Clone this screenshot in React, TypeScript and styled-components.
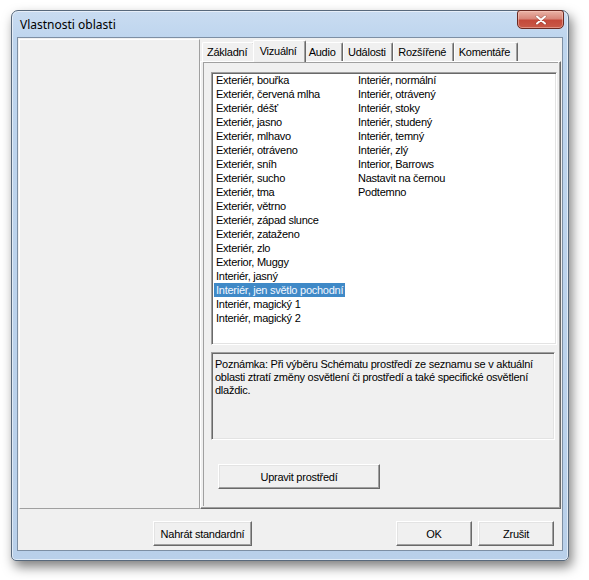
import React from "react";
import styled, { createGlobalStyle } from "styled-components";

const GlobalStyle = createGlobalStyle`
  html, body { margin: 0; padding: 0; background: #ffffff; }
  body { font-family: "Liberation Sans", Arial, sans-serif; }
  * { box-sizing: border-box; }
`;

const Stage = styled.div`
  width: 589px;
  height: 580px;
  padding: 10px 0 0 11px;
`;

const Window = styled.div`
  position: relative;
  width: 558px;
  height: 551px;
  border: 1px solid #58697c;
  border-radius: 7px 7px 5px 5px;
  background: linear-gradient(180deg, #c9dcf1 0%, #bed5ee 5%, #b9d0ea 100%);
  box-shadow: inset 0 0 0 1px rgba(255, 255, 255, 0.55), 3px 6px 12px rgba(0, 0, 0, 0.5);
  display: flex;
  flex-direction: column;
`;

const TitleBar = styled.div`
  height: 26px;
  display: flex;
  align-items: center;
  padding-left: 8px;
  font-family: "Noto Sans", "Liberation Sans", sans-serif;
  font-size: 12px;
  color: #000;
`;

const CloseButton = styled.div`
  position: absolute;
  top: -1px;
  right: 4px;
  width: 47px;
  height: 19px;
  border: 1px solid #6a2a22;
  border-radius: 3px 3px 5px 5px;
  background: linear-gradient(180deg, #eab3a6 0%, #d8877a 45%, #c4493a 55%, #c85a48 100%);
  box-shadow: inset 0 0 0 1px rgba(255, 210, 200, 0.45);
  display: flex;
  align-items: center;
  justify-content: center;
`;

const Client = styled.div`
  margin: 0 5px 0 5px;
  height: 514px;
  border: 1px solid #7d8fa4;
  background: #f0f0f0;
  display: flex;
  flex-direction: column;
  font-size: 11px;
  letter-spacing: -0.25px;
  color: #000;
`;

const MainRow = styled.div`
  height: 471px;
  display: flex;
`;

const SidePanel = styled.div`
  width: 181px;
  margin: 1px 0 0 1px;
  border-top: 1px solid #ffffff;
  border-left: 1px solid #ffffff;
  border-right: 1px solid #a0a0a0;
  border-bottom: 1px solid #a0a0a0;
  background: #f0f0f0;
`;

const TabControl = styled.div`
  flex: 1;
  display: flex;
  flex-direction: column;
  padding-top: 2px;
  padding-right: 1px;
`;

const TabStrip = styled.div`
  height: 21px;
  display: flex;
  align-items: flex-end;
  padding-left: 2px;
  position: relative;
  z-index: 1;
`;

const Tab = styled.div<{ $active?: boolean }>`
  height: ${(p) => (p.$active ? "22px" : "19px")};
  margin: ${(p) => (p.$active ? "0 -2px -1px -2px" : "0")};
  padding: ${(p) => (p.$active ? "0 8px 1px 6px" : "0 6.5px 0 4px")};
  display: flex;
  align-items: center;
  background: #f0f0f0;
  border-top: 1px solid #ffffff;
  border-left: 1px solid #ffffff;
  border-right: 1px solid #696969;
  border-radius: 2px 2px 0 0;
  box-shadow: inset -1px 0 0 #a0a0a0;
  position: relative;
  z-index: ${(p) => (p.$active ? 2 : 1)};
  white-space: nowrap;
`;

const TabPanel = styled.div`
  flex: 1;
  border-top: 1px solid #ffffff;
  border-left: 1px solid #ffffff;
  border-right: 1px solid #696969;
  border-bottom: 1px solid #696969;
  box-shadow: inset -1px -1px 0 #a0a0a0;
  display: flex;
`;

const PageFrame = styled.div`
  flex: 1;
  margin: 0 2px 2px 2px;
  border-top: 1px solid #a0a0a0;
  border-left: 1px solid #a0a0a0;
  padding: 9px 0 0 7px;
  display: flex;
  flex-direction: column;
`;

const SunkenBox = styled.div`
  border-top: 1px solid #a0a0a0;
  border-left: 1px solid #a0a0a0;
  border-right: 1px solid #ffffff;
  border-bottom: 1px solid #ffffff;
  box-shadow: inset 1px 1px 0 #696969, inset -1px -1px 0 #e3e3e3;
`;

const ListBox = styled(SunkenBox)`
  width: 346px;
  height: 273px;
  background: #ffffff;
  padding: 0 0 0 1px;
  display: grid;
  grid-auto-flow: column;
  grid-template-rows: repeat(18, 14px);
  grid-auto-columns: 142px;
  align-content: start;
`;

const ListItem = styled.div`
  height: 14px;
  padding-left: 1px;
  line-height: 14px;
  white-space: nowrap;
`;

const ItemLabel = styled.span<{ $selected?: boolean }>`
  display: inline-block;
  padding: 0 2px;
  height: 14px;
  background: ${(p) => (p.$selected ? "#3f89c7" : "transparent")};
  color: ${(p) => (p.$selected ? "#f2f7ff" : "#000")};
`;

const NoteBox = styled(SunkenBox)`
  width: 344px;
  height: 88px;
  margin-top: 7px;
  padding: 5px 4px 0 3px;
  line-height: 13px;
  background: #f0f0f0;
`;

const Button = styled.button<{ $w: number }>`
  width: ${(p) => p.$w}px;
  height: 25px;
  padding: 0;
  font-family: "Liberation Sans", Arial, sans-serif;
  font-size: 11px;
  letter-spacing: -0.25px;
  color: #000;
  background: #f0f0f0;
  border-top: 1px solid #ffffff;
  border-left: 1px solid #ffffff;
  border-right: 1px solid #696969;
  border-bottom: 1px solid #696969;
  box-shadow: inset -1px -1px 0 #a0a0a0, inset 1px 1px 0 #e3e3e3;
  display: flex;
  align-items: center;
  justify-content: center;
`;

const EditButton = styled(Button)`
  margin: 24px 0 0 7px;
`;

const BottomBar = styled.div`
  flex: 1;
  display: flex;
  align-items: flex-start;
  padding: 12px 8px 0 135px;
`;

const Spacer = styled.div`
  flex: 1;
`;

const ButtonGroup = styled.div`
  display: flex;
  gap: 6px;
`;

const tabs = ["Základní", "Vizuální", "Audio", "Události", "Rozšířené", "Komentáře"];

const schemes = [
  "Exteriér, bouřka",
  "Exteriér, červená mlha",
  "Exteriér, déšť",
  "Exteriér, jasno",
  "Exteriér, mlhavo",
  "Exteriér, otráveno",
  "Exteriér, sníh",
  "Exteriér, sucho",
  "Exteriér, tma",
  "Exteriér, větrno",
  "Exteriér, západ slunce",
  "Exteriér, zataženo",
  "Exteriér, zlo",
  "Exterior, Muggy",
  "Interiér, jasný",
  "Interiér, jen světlo pochodní",
  "Interiér, magický 1",
  "Interiér, magický 2",
  "Interiér, normální",
  "Interiér, otrávený",
  "Interiér, stoky",
  "Interiér, studený",
  "Interiér, temný",
  "Interiér, zlý",
  "Interior, Barrows",
  "Nastavit na černou",
  "Podtemno",
];

const selected = "Interiér, jen světlo pochodní";

export default function App() {
  return (
    <Stage>
      <GlobalStyle />
      <Window>
        <TitleBar>Vlastnosti oblasti</TitleBar>
        <CloseButton>
          <svg width="12" height="10" viewBox="0 0 12 10">
            <path d="M2 1.5 L10 8.5 M10 1.5 L2 8.5" stroke="#5a2019" strokeWidth="3" strokeLinecap="round" opacity="0.35" />
            <path d="M2 1.5 L10 8.5 M10 1.5 L2 8.5" stroke="#ffffff" strokeWidth="2" strokeLinecap="round" />
          </svg>
        </CloseButton>
        <Client>
          <MainRow>
            <SidePanel />
            <TabControl>
              <TabStrip>
                {tabs.map((t) => (
                  <Tab key={t} $active={t === "Vizuální"}>
                    {t}
                  </Tab>
                ))}
              </TabStrip>
              <TabPanel>
                <PageFrame>
                  <ListBox>
                    {schemes.map((s) => (
                      <ListItem key={s}>
                        <ItemLabel $selected={s === selected}>{s}</ItemLabel>
                      </ListItem>
                    ))}
                  </ListBox>
                  <NoteBox>
                    Poznámka: Při výběru Schématu prostředí ze seznamu se v aktuální
                    <br />
                    oblasti ztratí změny osvětlení či prostředí a také specifické osvětlení
                    <br />
                    dlaždic.
                  </NoteBox>
                  <EditButton $w={162}>Upravit prostředí</EditButton>
                </PageFrame>
              </TabPanel>
            </TabControl>
          </MainRow>
          <BottomBar>
            <Button $w={99}>Nahrát standardní</Button>
            <Spacer />
            <ButtonGroup>
              <Button $w={76}>OK</Button>
              <Button $w={76}>Zrušit</Button>
            </ButtonGroup>
          </BottomBar>
        </Client>
      </Window>
    </Stage>
  );
}
